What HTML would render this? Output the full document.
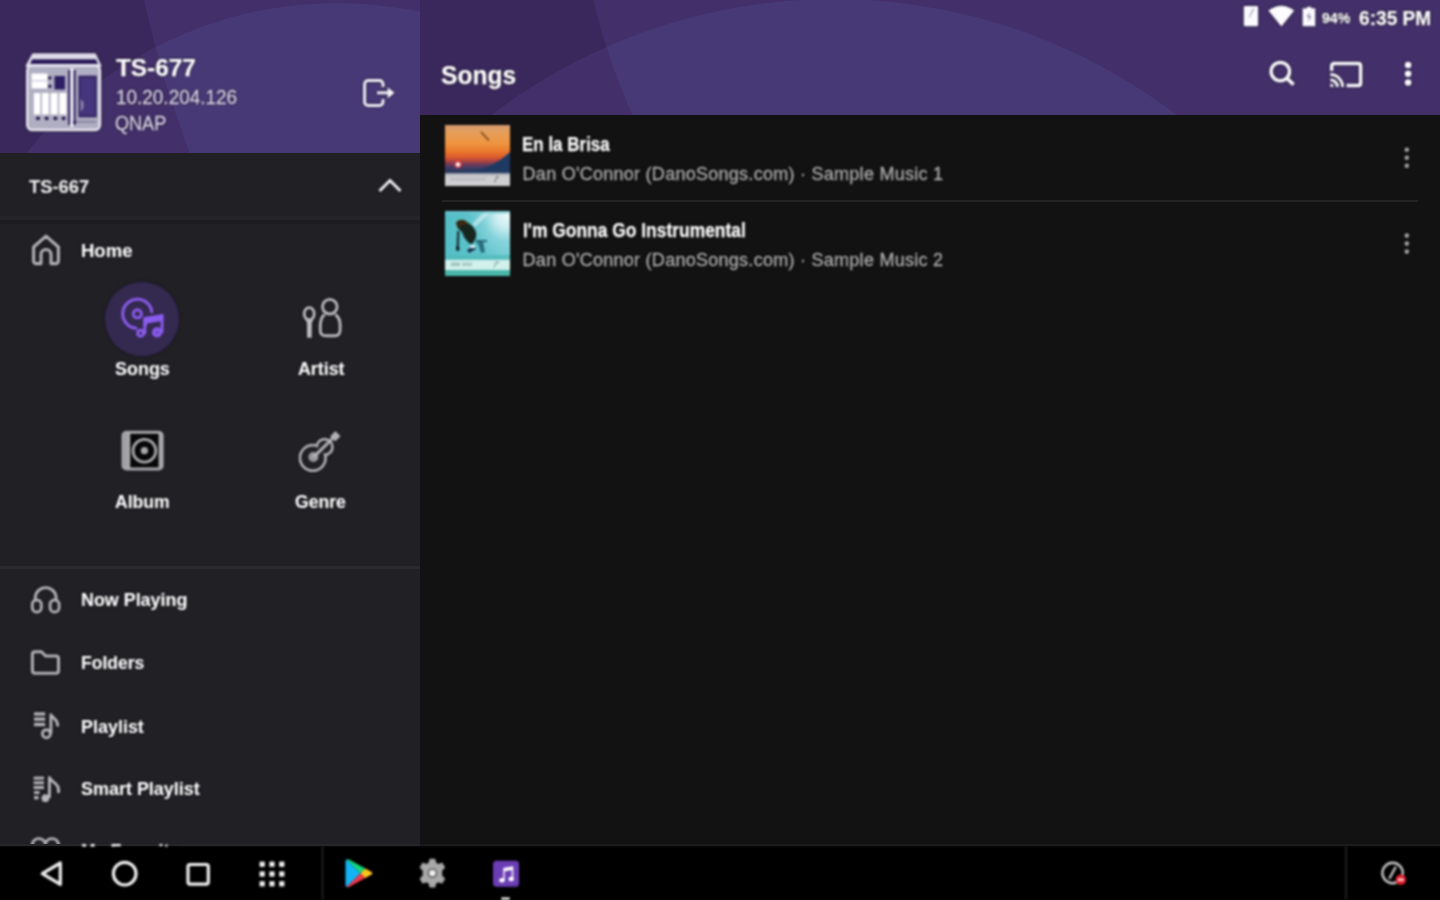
<!DOCTYPE html>
<html lang="en">
<head>
<meta charset="utf-8">
<title>Songs</title>
<style>
*{box-sizing:border-box;margin:0;padding:0}
html,body{width:1440px;height:900px;overflow:hidden;background:#121212}
body{position:relative;font-family:"Liberation Sans",sans-serif;color:#fff}
#side{position:absolute;left:0;top:0;width:420px;height:847px;background:#212125;overflow:hidden}
#sidehead{position:absolute;left:0;top:0;width:420px;height:153px;background:#3a285c;overflow:hidden}
#main{position:absolute;left:420px;top:0;width:1020px;height:847px;background:#121212;overflow:hidden}
#mainhead{position:absolute;left:0;top:0;width:1020px;height:115px;background:#3a285c;overflow:hidden}
#nav{position:absolute;left:0;top:846px;width:1440px;height:54px;background:linear-gradient(180deg,#0a0a0a 0,#000 2.5px);overflow:hidden}
.t{position:absolute;white-space:nowrap;line-height:1;transform-origin:0 0}
.b{font-weight:bold;-webkit-text-stroke:0.25px currentColor}
.r{-webkit-text-stroke:0.3px currentColor}
.m{font-weight:bold;-webkit-text-stroke:0.15px currentColor}
svg{position:absolute;left:0;top:0;overflow:visible}
.hr{position:absolute;height:2px;background:#18181b}
.thumb{position:absolute;overflow:hidden}
#page{position:absolute;left:0;top:0;width:1440px;height:900px;overflow:hidden}
#texts,#ic-side,#ic-main,#ic-nav,.thumb{filter:blur(0.8px)}
#texts .t{text-shadow:0 0 1.5px rgba(0,0,12,.95),0 0 2.5px rgba(0,0,12,.6)}
#ic-side,#ic-main,#ic-nav{filter:drop-shadow(0 0 1.2px rgba(0,0,12,.9)) blur(0.8px)}
#texts{position:absolute;left:0;top:0;width:1440px;height:900px}
</style>
</head>
<body>
<div id="page">
<!-- ================= MAIN ================= -->
<div id="main">
  <div id="mainhead">
    <svg width="1020" height="115" viewBox="420 0 1020 115">
      <defs><clipPath id="c2"><circle cx="1178" cy="-135" r="600"/></clipPath></defs>
      <circle cx="1178" cy="-135" r="600" fill="#432f69"/>
      <circle cx="834" cy="564" r="565" fill="#432f69"/>
      <circle cx="834" cy="564" r="565" fill="#473976" clip-path="url(#c2)"/>
    </svg>
  </div>

  <!-- row dividers -->
  <div class="hr" style="left:22px;top:200px;width:976px;height:2px;background:#232323"></div>
  <!-- thumbnails -->
  <div class="thumb" id="th1" style="left:25px;top:125px;width:65px;height:61px;background:linear-gradient(180deg,#d59a72 0%,#e39f5e 10%,#ef9540 30%,#ea7a2e 43%,#dc5a2c 53%,#b04440 59%,#6a3a58 65%,#3a3c64 71%,#24385a 79%)">
    <svg width="65" height="61" viewBox="0 0 65 61">
      <path d="M22 47 C38 45 52 39 65 27 V50 H22 Z" fill="#1e3a62"/>
      <path d="M0 46 H65 V50 H0 Z" fill="#2a3a5e" opacity=".6"/>
      <circle cx="13" cy="39.500" r="4" fill="#d8383c" opacity=".7"/>
      <circle cx="13" cy="39.500" r="2.300" fill="#fff0f0"/>
      <path d="M36.500 7.500 L43.500 15" stroke="#7a4a20" stroke-width="1.800" stroke-linecap="round"/>
      <rect x="0" y="48.500" width="65" height="12.500" fill="#cfcfd1"/>
      <rect x="0" y="48.500" width="65" height="2" fill="#b4b6bd"/>
      <rect x="5" y="53" width="36" height="2.200" fill="#b9b9bb"/>
      <path d="M49.500 57.500 L52 51.500 L54 53" stroke="#8f8f92" stroke-width="1.500" fill="none"/>
    </svg>
  </div>
  <div class="thumb" id="th2" style="left:25px;top:211px;width:65px;height:65px;background:radial-gradient(ellipse 60% 70% at 95% 5%,#eefafa 0%,#c9ecf0 30%,rgba(150,218,226,.6) 60%,rgba(98,196,204,0) 100%),linear-gradient(90deg,#54bec7 0%,#5cc2ca 50%,#74ccd4 100%)">
    <svg width="65" height="65" viewBox="0 0 65 65">
      <defs><linearGradient id="g2" x1="0" y1="0" x2="0" y2="1"><stop offset="0" stop-color="#fff" stop-opacity=".45"/><stop offset=".5" stop-color="#fff" stop-opacity="0"/></linearGradient></defs>
      
      <path d="M27 13 L40 0 H47 L30 16 Z" fill="#fff" opacity=".45"/>
      <rect x="0" y="0" width="65" height="2.500" fill="#6fc8d0" opacity=".7"/>
      <path d="M11.500 12 C13 8.500 18 8.500 21 11 C26 13 30 17 31 21.500 C32 26 30 30 27 33 L24.500 32.500 C21 29.500 18 25 17 21 C14 19 11.500 16 11.500 12 Z" fill="#16261f"/>
      <path d="M11 12 C13 8 19 8 22 11 L24 14 C19 13 15 14 13 18 Z" fill="#3a2a12"/>
      <path d="M12 20 L14.500 20 L14 37 L11.500 37 Z" fill="#1f3a3a"/>
      <ellipse cx="12.800" cy="37.500" rx="1.800" ry="2.600" fill="#101820"/>
      <path d="M22 39 L29 35 L31 38 L24 42 Z" fill="#1a2c4a"/>
      <ellipse cx="27.800" cy="35.600" rx="2.600" ry="1.700" fill="#f4f8f8"/>
      <path d="M31 29 L42 29 L42 31 L38 31 L40 41 L36 42 L33 32 L31 32 Z" fill="#2a6c7c"/>
      <rect x="0" y="44" width="65" height="5" fill="#52b9b9" opacity=".75"/>
      <rect x="0" y="48.800" width="65" height="10.400" fill="#d2f0ec"/>
      <rect x="6" y="51.500" width="9" height="3.600" fill="#9fc4c0"/><rect x="17" y="51.500" width="10" height="3.600" fill="#a9ccc8"/>
      <path d="M49 56.500 L51.500 50.800 L54 52" stroke="#8fb4b0" stroke-width="1.400" fill="none"/>
      <rect x="0" y="59.200" width="65" height="5.800" fill="#49b7a9"/>
    </svg>
  </div>
  <svg id="ic-main" width="1020" height="847" viewBox="420 0 1020 847">
    <!-- row overflow dots -->
    <g fill="#a4a4a4">
      <circle cx="1406.800" cy="149.800" r="2.300"/><circle cx="1406.800" cy="157.800" r="2.300"/><circle cx="1406.800" cy="165.800" r="2.300"/>
      <circle cx="1406.800" cy="235.600" r="2.300"/><circle cx="1406.800" cy="243.600" r="2.300"/><circle cx="1406.800" cy="251.600" r="2.300"/>
    </g>
    <!-- toolbar: search -->
    <circle cx="1280.300" cy="71.600" r="9.200" fill="none" stroke="#f8f7fc" stroke-width="3.500"/>
    <path d="M1287 78.400 L1293.600 84.600" stroke="#f8f7fc" stroke-width="3.700" stroke-linecap="butt"/>
    <!-- cast -->
    <g fill="none" stroke="#f8f7fc" stroke-width="3.500">
      <path d="M1331.700 71 V65.800 a2.200 2.200 0 0 1 2.200 -2.200 H1358.400 a2.200 2.200 0 0 1 2.200 2.200 V83.200 a2.200 2.200 0 0 1 -2.200 2.200 H1346.500"/>
      <path d="M1330.300 74.600 a12.300 12.300 0 0 1 12.300 12.300" stroke-width="3"/>
      <path d="M1330.300 79.800 a7.100 7.100 0 0 1 7.100 7.100" stroke-width="3"/>
    </g>
    <path d="M1330.300 83.600 a3.300 3.300 0 0 1 3.300 3.300 H1330.300 Z" fill="#f4f2fa"/>
    <!-- overflow -->
    <g fill="#fbfaff"><circle cx="1408.100" cy="65" r="3.300"/><circle cx="1408.100" cy="73.800" r="3.300"/><circle cx="1408.100" cy="82.500" r="3.300"/></g>
    <!-- status: sim -->
    <rect x="1243.800" y="6" width="14.300" height="20.200" rx="1.200" fill="#fbfaff"/>
    <path d="M1254.500 8.500 L1252.500 8.500 L1248.500 17.500 L1250 17.500 Z" fill="#b9b4cc"/>
    <!-- wifi -->
    <path d="M1268.300 10.600 Q1281.400 0.800 1294.300 10.600 L1281.400 26.400 Z" fill="#fdfcff"/>
    <!-- battery -->
    <path d="M1302.600 8.200 H1306.800 V6.700 H1311.300 V8.200 H1315.300 V26.300 H1302.600 Z" fill="#fbfaff"/>
    <path d="M1309.800 11.500 L1306.600 17.300 H1309 L1308.300 22 L1311.500 16 H1309.200 Z" fill="#8f88ad"/>
  </svg>
</div>
<!-- ================= SIDEBAR ================= -->
<div id="side">
  <div id="sidehead">
    <svg width="420" height="153" viewBox="0 0 420 153">
      <defs><clipPath id="ca"><circle cx="1161" cy="-222" r="1041"/></clipPath></defs>
      <circle cx="1161" cy="-222" r="1041" fill="#432f69"/>
      <circle cx="337" cy="399" r="396" fill="#432f69"/>
      <circle cx="337" cy="399" r="396" fill="#473976" clip-path="url(#ca)"/>
    </svg>
  </div>

<svg id="ic-side" width="420" height="847" viewBox="0 0 420 847">
  <!-- NAS -->
  <g id="nas">
    <path d="M33 54.200 H95 L100.500 66 H26.500 Z" fill="#dedce9" stroke="#dedce9" stroke-width="2" stroke-linejoin="round"/>
    <path d="M32.200 59.300 H95.800 L98 64 H30 Z" fill="#2a1a58"/>
    <rect x="27.2" y="65.5" width="72.8" height="64.5" rx="5" fill="#b0aec2" stroke="#e9e7f2" stroke-width="2.4"/>
    <rect x="31.5" y="73.5" width="16" height="15" fill="#fff"/>
    <rect x="31.5" y="80.2" width="16" height="1.2" fill="#c9c7d6"/>
    <circle cx="49.8" cy="78" r="1.7" fill="#1d1145"/>
    <circle cx="49.8" cy="86.3" r="1.7" fill="#1d1145"/>
    <rect x="54.5" y="76" width="10.5" height="13.5" fill="#2d1d63"/>
    <rect x="33.8" y="93" width="6.6" height="21.5" fill="#fff"/>
    <rect x="42" y="93" width="6.8" height="21.5" fill="#fff"/>
    <rect x="50.6" y="93" width="7" height="21.5" fill="#fff"/>
    <rect x="59.4" y="93" width="7" height="21.5" fill="#fff"/>
    <circle cx="38" cy="118.3" r="1.9" fill="#1d1145"/>
    <circle cx="46.7" cy="118.3" r="1.9" fill="#1d1145"/>
    <circle cx="55.4" cy="118.3" r="1.9" fill="#1d1145"/>
    <circle cx="63.6" cy="118.3" r="1.9" fill="#1d1145"/>
    <rect x="68.2" y="70" width="2.2" height="55" fill="#2a1a58"/>
    <rect x="70.4" y="68" width="3.2" height="59" fill="#f4f3fa"/>
    <rect x="73.6" y="70" width="2" height="55" fill="#2a1a58"/>
    <rect x="79.3" y="76.5" width="16.6" height="40" fill="#45357c" stroke="#2a1a58" stroke-width="1.6"/>
    <path d="M80.5 99 l3 3 v6 l-3 4 z" fill="#8d86ad"/>
    <rect x="75" y="120.5" width="21" height="2.6" fill="#8f8ca6"/>
    <circle cx="74.6" cy="122" r="1.6" fill="#2a1a58"/>
  </g>
  <!-- logout -->
  <g fill="none" stroke="#f1eff8" stroke-width="3" stroke-linecap="butt" stroke-linejoin="round">
    <path d="M383 87 V84 a3.6 3.6 0 0 0 -3.6 -3.6 H368.2 a3.6 3.6 0 0 0 -3.6 3.6 V102 a3.6 3.6 0 0 0 3.6 3.6 H379.4 a3.6 3.6 0 0 0 3.6 -3.6 V99"/>
    <path d="M377 92.8 H389"/>
  </g>
  <path d="M387.6 87.2 L394.6 92.8 L387.6 98.4 Z" fill="#f6f5fb"/>
  <!-- chevron up -->
  <path d="M379.5 191 L390 180.5 L400.500 191" fill="none" stroke="#f2f2f2" stroke-width="3" stroke-linecap="butt" stroke-linejoin="miter"/>
  <!-- home -->
  <path d="M46 236.2 L33.6 247 V261 a2.6 2.6 0 0 0 2.6 2.6 H41 V254.500 a5 5 0 0 1 10 0 V263.600 H55.800 a2.600 2.600 0 0 0 2.600 -2.600 V247 Z" fill="none" stroke="#b4b4b8" stroke-width="3.1" stroke-linejoin="round"/>
  <!-- songs selected -->
  <circle cx="142" cy="319" r="37.3" fill="#34294f"/>
  <g fill="none" stroke="#8b5cf0" stroke-width="2.9" stroke-linecap="round">
    <path d="M151.800 311.800 A14.600 14.600 0 1 0 136 328.300"/>
    <circle cx="137.300" cy="313.800" r="4.100"/>
    <circle cx="140.600" cy="333.200" r="3"/>
    <path d="M144.800 333 V319"/>
    <circle cx="157" cy="332.400" r="3.600" fill="#6f49c4"/>
    <path d="M162 332 V316"/>
  </g>
  <path d="M143.500 317.300 L163.300 314 V320.800 L147 323.400 V326 H143.500 Z" fill="#8b5cf0"/>
  <!-- artist -->
  <g fill="none" stroke="#bcbcbe" stroke-width="2.9">
    <circle cx="329.800" cy="306.700" r="7.300"/>
    <path d="M324.600 314.500 C319.500 318 320 326 320.300 331 C320.500 335 323 335.800 326 335.800 H335 C338.500 335.800 340 334 340.100 330 C340.300 324 340.500 318 335.300 314.500"/>
    <ellipse cx="309.200" cy="313.800" rx="5" ry="6.200"/>
  </g>
  <path d="M304.800 318.500 L307 323 V337.700 H311.800 V323 L313.800 318.500 Z" fill="#bcbcbe"/>
  <!-- album -->
  <rect x="123" y="432.200" width="39.200" height="36.800" rx="3.400" fill="#060607" stroke="#a9a9ad" stroke-width="3"/>
  <rect x="122" y="433" width="8.200" height="35" fill="#a9a9ad"/>
  <rect x="124.800" y="433.500" width="1" height="34" fill="#8e8e92"/>
  <rect x="158.600" y="433" width="3" height="35" fill="#a9a9ad"/>
  <circle cx="144.400" cy="450.700" r="11.400" fill="none" stroke="#a9a9ad" stroke-width="2.800"/>
  <circle cx="144.400" cy="450.700" r="3.600" fill="#a9a9ad"/>
  <!-- genre guitar -->
  <g stroke="#b2b2b5" stroke-width="2.900" fill="none">
    <circle cx="312.800" cy="457.900" r="12.700"/>
    <circle cx="324.600" cy="447" r="7.800"/>
  </g>
  <circle cx="312.800" cy="457.900" r="11.400" fill="#212125"/>
  <circle cx="324.600" cy="447" r="6.500" fill="#212125"/>
  <circle cx="313.400" cy="457" r="5" fill="#9b9b9e"/>
  <path d="M313.600 457.200 L333.500 437.500" stroke="#b2b2b5" stroke-width="3.100" fill="none"/>
  <path d="M335.400 431 L340.600 436.200 L335.200 441.600 L330 436.400 Z" fill="#b2b2b5"/>
  <!-- headphones -->
  <g fill="none" stroke="#b4b4b8" stroke-width="2.900">
    <path d="M35.300 600.500 V598 a10.400 10.400 0 0 1 20.800 0 V600.500"/>
    <rect x="32.300" y="600" width="9" height="12" rx="4.300"/>
    <rect x="50.100" y="600" width="9" height="12" rx="4.300"/>
  </g>
  <!-- folder -->
  <path d="M32.400 654.300 a2.500 2.500 0 0 1 2.500 -2.500 H41.500 L45.500 656 H56 a2.500 2.500 0 0 1 2.500 2.500 V670.700 a2.500 2.500 0 0 1 -2.500 2.500 H34.900 a2.500 2.500 0 0 1 -2.500 -2.500 Z" fill="none" stroke="#b4b4b8" stroke-width="3" stroke-linejoin="round"/>
  <!-- playlist -->
  <g fill="#b9b9bc">
    <rect x="34" y="712.300" width="11.200" height="3.300"/>
    <rect x="34" y="717.500" width="11.200" height="3.300"/>
    <rect x="34" y="722.800" width="11.200" height="3.400"/>
  </g>
  <circle cx="46.400" cy="733.700" r="4" fill="none" stroke="#b9b9bc" stroke-width="2.900"/>
  <path d="M50.900 733.500 V714.800 C52.500 718 58.500 719 57.600 726.500" fill="none" stroke="#b9b9bc" stroke-width="2.900" stroke-linejoin="round"/>
  <!-- smart playlist -->
  <g fill="#b9b9bc">
    <rect x="33.600" y="776.600" width="10.400" height="3"/>
    <rect x="33.600" y="781.300" width="10.400" height="3"/>
    <rect x="33.600" y="786" width="10.400" height="3.100"/>
    <rect x="34" y="791" width="5.600" height="3.100"/>
    <rect x="34" y="796" width="4.600" height="3.400"/>
  </g>
  <circle cx="45.400" cy="798.200" r="3.900" fill="#b9b9bc"/>
  <path d="M49.400 798 V777.500 C51 782.500 60.500 783 58.300 793" fill="none" stroke="#b9b9bc" stroke-width="2.900" stroke-linejoin="round"/>
  <!-- favourite (clipped) -->
  <path d="M45.400 843.500 C43 836.300 32.200 837 32.200 846 C32.200 853 45.400 862 45.400 862 C45.400 862 58.600 853 58.600 846 C58.600 837 47.800 836.300 45.400 843.500 Z" fill="none" stroke="#b4b4b8" stroke-width="2.900"/>
</svg>
  <div class="hr" style="left:0;top:216px;width:420px;height:4px;background:#252529"></div><div class="hr" style="left:0;top:220px;width:420px;height:4px;background:#1d1d21"></div>
  <div class="hr" style="left:0;top:565.600px;width:420px;height:3px;background:#29292e"></div>
</div>
<div style="position:absolute;left:0;top:844px;width:420px;height:2.5px;background:#27272b"></div><div style="position:absolute;left:420px;top:844px;width:1020px;height:2.5px;background:#1b1b1b"></div>
<div id="nav">
  <svg id="ic-nav" width="1440" height="54" viewBox="0 846 1440 54">
    
    <rect x="321.500" y="846" width="2" height="54" fill="#1d1d1d"/>
    <rect x="1345" y="846" width="2" height="54" fill="#1d1d1d"/>
    <!-- back -->
    <path d="M60.300 863 V884.400 L42.300 873.700 Z" fill="none" stroke="#f0f0f0" stroke-width="3.200" stroke-linejoin="round"/>
    <!-- home -->
    <circle cx="124.700" cy="873.700" r="11.300" fill="none" stroke="#f0f0f0" stroke-width="3.200"/>
    <!-- recents -->
    <rect x="188" y="864.500" width="20.300" height="19.600" rx="2" fill="none" stroke="#f0f0f0" stroke-width="3.200"/>
    <!-- grid -->
    <g fill="#f0f0f0">
      <rect x="259.600" y="861.600" width="5.200" height="5.200"/><rect x="269.400" y="861.600" width="5.200" height="5.200"/><rect x="279.200" y="861.600" width="5.200" height="5.200"/>
      <rect x="259.600" y="871.400" width="5.200" height="5.200"/><rect x="269.400" y="871.400" width="5.200" height="5.200"/><rect x="279.200" y="871.400" width="5.200" height="5.200"/>
      <rect x="259.600" y="881.200" width="5.200" height="5.200"/><rect x="269.400" y="881.200" width="5.200" height="5.200"/><rect x="279.200" y="881.200" width="5.200" height="5.200"/>
    </g>
    <!-- play store -->
    <g>
      <path d="M346.500 859.500 L360.500 873.300 L346.500 887 Q345.500 886.500 345.500 885 V861.500 Q345.500 860 346.500 859.500 Z" fill="#12b4f4"/>
      <path d="M346.500 859.500 Q347.500 858.800 349 859.600 L365.300 868.600 L360.500 873.300 Z" fill="#16d97a"/>
      <path d="M346.500 887 Q347.500 887.800 349 887 L365.300 878 L360.500 873.300 Z" fill="#f0384a"/>
      <path d="M365.300 868.600 L371.600 872 Q373.300 873.300 371.600 874.600 L365.300 878 L360.500 873.300 Z" fill="#ffc61a"/>
    </g>
    <!-- settings gear -->
    <g transform="translate(432.400 873.100) scale(0.93)">
      <path d="M-2.600 -14.800 H2.600 L3.600 -10.600 L6.200 -9.200 L10.400 -10.500 L13 -6 L9.900 -3 V0 V3 L13 6 L10.400 10.500 L6.200 9.200 L3.600 10.600 L2.600 14.800 H-2.600 L-3.600 10.600 L-6.200 9.200 L-10.400 10.500 L-13 6 L-9.900 3 V-3 L-13 -6 L-10.400 -10.500 L-6.200 -9.200 L-3.600 -10.600 Z" fill="#a9a9a9" stroke="#a9a9a9" stroke-width="1.200" stroke-linejoin="round"/>
      <circle r="5.600" fill="#6e6e6e"/>
      <circle r="3.400" fill="#f2f2f2"/>
    </g>
    <!-- music app -->
    <rect x="493" y="860.700" width="26" height="26" rx="3.500" fill="#6b3db4"/>
    <g fill="#fff">
      <ellipse cx="502" cy="880.200" rx="2.700" ry="2.200"/><ellipse cx="511.200" cy="879" rx="2.700" ry="2.200"/>
      <path d="M503.300 868 L513.200 866.200 V879 H511.700 V870 L504.700 871.300 V880.200 H503.300 Z"/>
    </g>
    <rect x="501.300" y="897.400" width="8.400" height="2.600" fill="#e8e8e8"/>
    <!-- right icon -->
    <circle cx="1392.600" cy="873" r="10.200" fill="none" stroke="#c4c4c4" stroke-width="2.400"/>
    <path d="M1389.300 878.800 L1395.800 866.800" stroke="#c4c4c4" stroke-width="2.400"/>
    <circle cx="1400.800" cy="879.600" r="5.200" fill="#e5232f"/>
    <rect x="1398" y="878.700" width="5.600" height="1.900" fill="#fff"/>
  </svg>
</div>

<!-- ================= TEXT ================= -->
<div id="texts">
<span id="t1" class="t b" style="left:115.9px;top:55.7px;font-size:24px;letter-spacing:0px;transform:scaleX(1.0135)">TS-677</span>
<span id="t2" class="t r" style="left:115.9px;top:87.3px;font-size:20px;color:#dcd6ec;letter-spacing:0px;transform:scaleX(0.9464)">10.20.204.126</span>
<span id="t3" class="t r" style="left:115.2px;top:114.0px;font-size:19.5px;color:#dcd6ec;letter-spacing:0px;transform:scaleX(0.9269)">QNAP</span>
<span id="t4" class="t m" style="left:28.7px;top:178.1px;font-size:18px;color:#f0f0f0;letter-spacing:0px;transform:scaleX(1.0184)">TS-667</span>
<span id="t5" class="t m" style="left:81.4px;top:241.7px;font-size:18.5px;letter-spacing:0px;transform:scaleX(1.0010)">Home</span>
<span id="t6" class="t m" style="left:114.6px;top:360.3px;font-size:18.5px;letter-spacing:0px;transform:scaleX(0.9703)">Songs</span>
<span id="t7" class="t m" style="left:297.7px;top:360.3px;font-size:18.5px;letter-spacing:0px;transform:scaleX(0.9621)">Artist</span>
<span id="t8" class="t m" style="left:114.8px;top:492.6px;font-size:18.5px;letter-spacing:0px;transform:scaleX(0.9514)">Album</span>
<span id="t9" class="t m" style="left:295.2px;top:492.6px;font-size:18.5px;letter-spacing:0px;transform:scaleX(0.9524)">Genre</span>
<span id="t10" class="t m" style="left:81.1px;top:591.0px;font-size:18.5px;letter-spacing:0px;transform:scaleX(0.9666)">Now Playing</span>
<span id="t11" class="t m" style="left:81.1px;top:654.1px;font-size:18.5px;letter-spacing:0px;transform:scaleX(0.9460)">Folders</span>
<span id="t12" class="t m" style="left:81.1px;top:718.0px;font-size:18.5px;letter-spacing:0px;transform:scaleX(0.9700)">Playlist</span>
<span id="t13" class="t m" style="left:80.7px;top:780.3px;font-size:18.5px;letter-spacing:0px;transform:scaleX(0.9706)">Smart Playlist</span>
<span id="t14" class="t m" style="left:80.8px;top:841.6px;font-size:18.5px;letter-spacing:0px;transform:scaleX(0.955);clip-path:inset(0 0 13.6px 0)">My Favorite</span>
<span id="t15" class="t b" style="left:441.1px;top:62.4px;font-size:26px;letter-spacing:0px;transform:scaleX(0.9459)">Songs</span>
<span id="t16" class="t b" style="left:522.1px;top:135.2px;font-size:19.5px;letter-spacing:0px;transform:scaleX(0.8705)">En la Brisa</span>
<span id="t17" class="t r" style="left:522.6px;top:164.8px;font-size:18px;color:#b0b0b0;letter-spacing:0.27px">Dan O'Connor (DanoSongs.com) · Sample Music 1</span>
<span id="t18" class="t b" style="left:522.9px;top:220.8px;font-size:19.5px;letter-spacing:0px;transform:scaleX(0.8929)">I'm Gonna Go Instrumental</span>
<span id="t19" class="t r" style="left:522.6px;top:250.8px;font-size:18px;color:#b0b0b0;letter-spacing:0.27px">Dan O'Connor (DanoSongs.com) · Sample Music 2</span>
<span id="t20" class="t b" style="left:1321.8px;top:9.8px;font-size:15.5px;letter-spacing:0px;transform:scaleX(0.9110)">94%</span>
<span id="t21" class="t b" style="left:1359.3px;top:7.5px;font-size:20px;letter-spacing:0px;transform:scaleX(0.9559)">6:35 PM</span>
</div>
</div>
</body>
</html>
